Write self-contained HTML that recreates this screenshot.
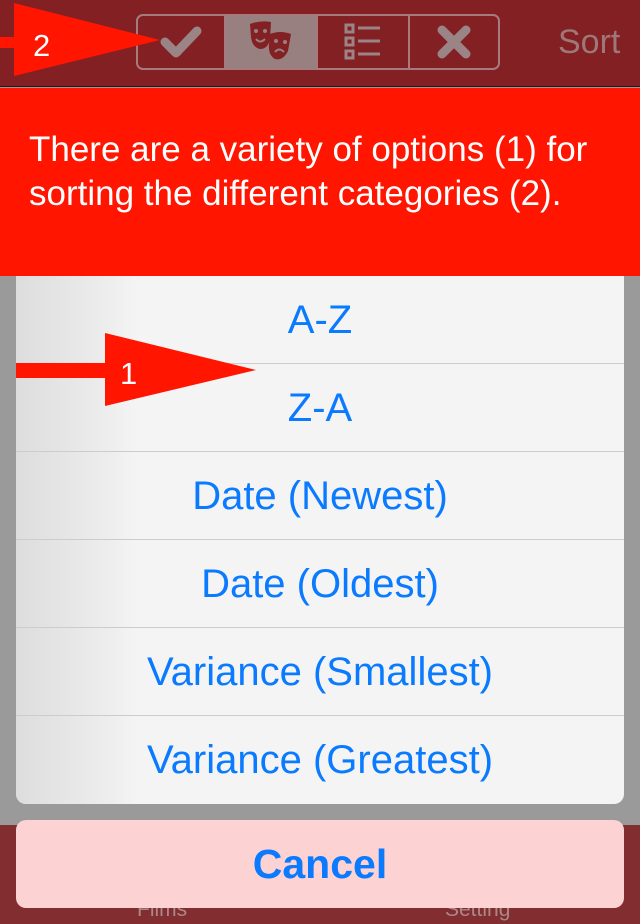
<!DOCTYPE html>
<html><head><meta charset="utf-8"><style>
*{margin:0;padding:0;box-sizing:border-box}
body{width:640px;height:924px;overflow:hidden;background:#9a9a9a;font-family:"Liberation Sans",sans-serif;position:relative}
.hdr{position:absolute;left:0;top:0;width:640px;height:87px;background:#822024;border-bottom:1px solid #3a0d0e}
.seg{position:absolute;left:136px;top:14px;width:364px;height:56px;border:2px solid #a77b7d;border-radius:7px;overflow:hidden;display:flex}
.seg div{height:100%;border-right:2px solid #a77b7d;display:flex;align-items:center;justify-content:center}
.seg div:last-child{border-right:none}
.sort{position:absolute;left:558px;top:23px;color:#a07778;font-size:34px}
.banner{position:absolute;left:0;top:88px;width:640px;height:188px;background:#ff1500;color:#fff;font-size:35px;line-height:44px;padding:40px 0 0 29px;white-space:nowrap}
.tab{position:absolute;left:0;top:825px;width:640px;height:99px;background:#822d30}
.tab span{position:absolute;top:73px;color:#a88;font-size:21px}
.sheet{position:absolute;left:16px;top:276px;width:608px;height:528px;background:#f4f4f4;border-radius:0 0 10px 10px;overflow:hidden}
.thumbs{position:absolute;left:0;top:0;width:120px;height:528px;background:linear-gradient(90deg,#ddd,#eee 80%,#f4f4f4)}
.row{position:absolute;left:0;width:608px;height:88px;border-bottom:1px solid #ccc;color:#0a7afe;font-size:40px;text-align:center;line-height:88px;white-space:nowrap}
.cancel{position:absolute;left:16px;top:820px;width:608px;height:88px;background:#fcd2d2;border-radius:10px;color:#0a7afe;font-size:41px;font-weight:bold;text-align:center;line-height:88px}
</style></head><body>
<div class="hdr">
 <div class="seg">
  <div style="width:88px"><svg width="44" height="40" viewBox="0 0 44 40"><path d="M6 20 L17 31 L38 9" stroke="#9a8485" stroke-width="9" fill="none" stroke-linecap="round" stroke-linejoin="round"/></svg></div>
  <div style="width:92px;background:#998080"><svg width="48" height="46" viewBox="0 0 48 46"><path d="M3 5 Q13 1 24 3 L23 20 Q21 30 13 30 Q5 28 4 18Z" fill="#822024"/><path d="M23 15 Q33 11 44 15 L41 32 Q36 42 28 40 Q21 36 22 25Z" fill="#822024"/><circle cx="9" cy="12" r="2" fill="#998080"/><circle cx="18" cy="12" r="2" fill="#998080"/><path d="M9 20 Q13 25 18 20" stroke="#998080" stroke-width="2" fill="none"/><circle cx="29" cy="22" r="2" fill="#998080"/><circle cx="38" cy="23" r="2" fill="#998080"/><path d="M28 33 Q32 28 37 33" stroke="#998080" stroke-width="2" fill="none"/></svg></div>
  <div style="width:92px"><svg width="40" height="40" viewBox="0 0 40 40" fill="none" stroke="#9a8485" stroke-width="3"><rect x="3" y="3" width="7" height="7"/><rect x="3" y="16" width="7" height="7"/><rect x="3" y="29" width="7" height="7"/><path d="M15 6H37M15 19H37M15 32H37"/></svg></div>
  <div style="width:88px"><svg width="36" height="36" viewBox="0 0 36 36"><path d="M6 6L30 30M30 6L6 30" stroke="#9a8485" stroke-width="9" stroke-linecap="round"/></svg></div>
 </div>
 <div class="sort">Sort</div>
</div>
<div class="banner">There are a variety of options (1) for<br>sorting the different categories (2).</div>
<div class="tab"><span style="left:137px">Films</span><span style="left:445px">Setting</span></div>
<div class="sheet">
 <div class="thumbs"></div>
 <div class="row" style="top:0">A-Z</div>
 <div class="row" style="top:88px">Z-A</div>
 <div class="row" style="top:176px">Date (Newest)</div>
 <div class="row" style="top:264px">Date (Oldest)</div>
 <div class="row" style="top:352px">Variance (Smallest)</div>
 <div class="row" style="top:440px;border:none">Variance (Greatest)</div>
</div>
<div class="cancel">Cancel</div>
<svg style="position:absolute;left:0;top:0" width="640" height="924">
 <path d="M0 37H14V3L160 40L14 76V48H0Z" fill="#ff1500"/>
 <text x="33" y="56" fill="#fff" font-family="Liberation Sans" font-size="31">2</text>
 <path d="M16 363H105V333L256 370L105 406V378H16Z" fill="#ff1500"/>
 <text x="120" y="384" fill="#fff" font-family="Liberation Sans" font-size="31">1</text>
</svg>
</body></html>
